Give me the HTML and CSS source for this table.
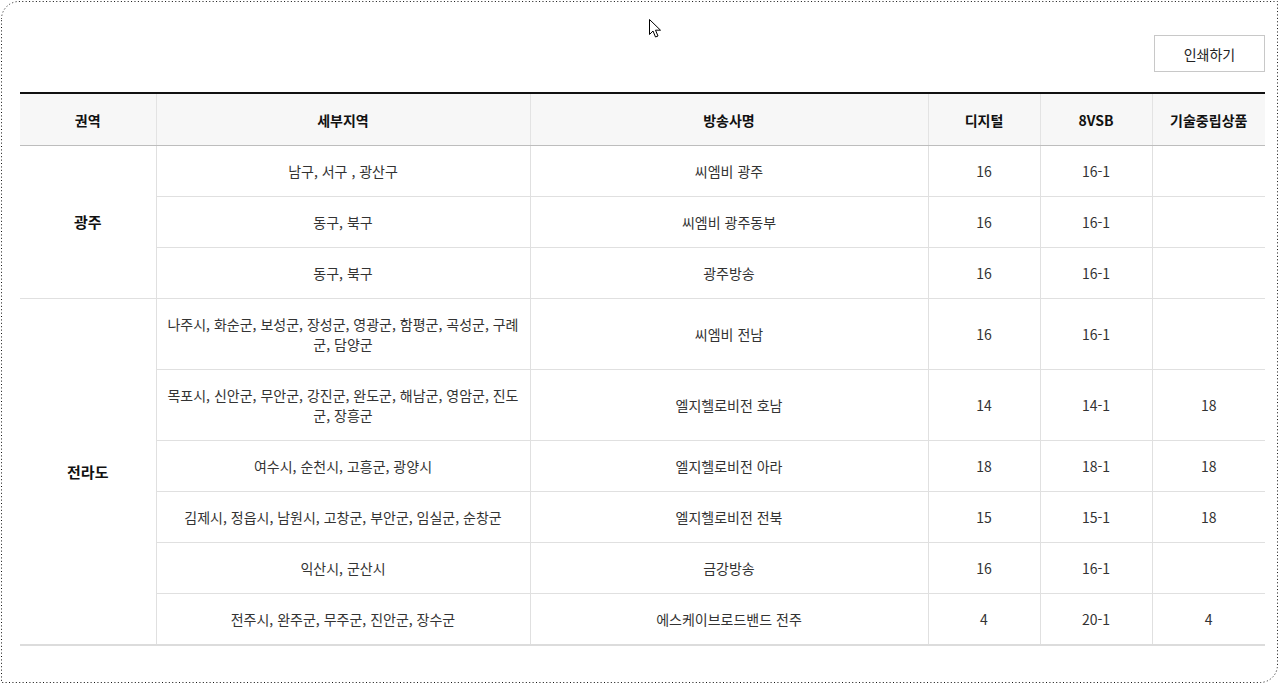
FILE: index.html
```html
<!DOCTYPE html>
<html lang="ko">
<head>
<meta charset="utf-8">
<title>채널 안내</title>
<link rel="stylesheet" href="styles.css">
</head>
<body>
<div class="page">
  <div class="toolbar">
    <button class="print-btn" type="button">인쇄하기</button>
  </div>
  <table class="channel-table">
    <colgroup>
      <col class="c-region">
      <col class="c-detail">
      <col class="c-station">
      <col class="c-num">
      <col class="c-num">
      <col class="c-num-last">
    </colgroup>
    <thead>
      <tr>
        <th>권역</th>
        <th>세부지역</th>
        <th>방송사명</th>
        <th>디지털</th>
        <th>8VSB</th>
        <th>기술중립상품</th>
      </tr>
    </thead>
    <tbody>
      <tr>
        <td class="region" rowspan="3">광주</td>
        <td>남구, 서구 , 광산구</td>
        <td>씨엠비 광주</td>
        <td>16</td>
        <td>16-1</td>
        <td></td>
      </tr>
      <tr>
        <td>동구, 북구</td>
        <td>씨엠비 광주동부</td>
        <td>16</td>
        <td>16-1</td>
        <td></td>
      </tr>
      <tr>
        <td>동구, 북구</td>
        <td>광주방송</td>
        <td>16</td>
        <td>16-1</td>
        <td></td>
      </tr>
      <tr>
        <td class="region" rowspan="6">전라도</td>
        <td>나주시, 화순군, 보성군, 장성군, 영광군, 함평군, 곡성군, 구례군, 담양군</td>
        <td>씨엠비 전남</td>
        <td>16</td>
        <td>16-1</td>
        <td></td>
      </tr>
      <tr>
        <td>목포시, 신안군, 무안군, 강진군, 완도군, 해남군, 영암군, 진도군, 장흥군</td>
        <td>엘지헬로비전 호남</td>
        <td>14</td>
        <td>14-1</td>
        <td>18</td>
      </tr>
      <tr>
        <td>여수시, 순천시, 고흥군, 광양시</td>
        <td>엘지헬로비전 아라</td>
        <td>18</td>
        <td>18-1</td>
        <td>18</td>
      </tr>
      <tr>
        <td>김제시, 정읍시, 남원시, 고창군, 부안군, 임실군, 순창군</td>
        <td>엘지헬로비전 전북</td>
        <td>15</td>
        <td>15-1</td>
        <td>18</td>
      </tr>
      <tr>
        <td>익산시, 군산시</td>
        <td>금강방송</td>
        <td>16</td>
        <td>16-1</td>
        <td></td>
      </tr>
      <tr>
        <td>전주시, 완주군, 무주군, 진안군, 장수군</td>
        <td>에스케이브로드밴드 전주</td>
        <td>4</td>
        <td>20-1</td>
        <td>4</td>
      </tr>
    </tbody>
  </table>
</div>

<svg class="frame" width="1280" height="684" viewBox="0 0 1280 684" aria-hidden="true">
  <path d="M1.5 19 A17.5 17.5 0 0 1 19 1.5 H1277.5 V665 A17.5 17.5 0 0 1 1260 682.5 H1.5 Z"
        fill="none" stroke="#111" stroke-width="1" stroke-dasharray="1 2.4"/>
</svg>

<svg class="cursor" width="14" height="20" viewBox="0 0 14 20" aria-hidden="true">
  <path d="M0.5 0.5 V15.5 L4 12 L6.5 18 L9 17 L6.5 11.2 H11.5 Z" fill="#fff" stroke="#000" stroke-width="1" stroke-linejoin="miter"/>
</svg>
</body>
</html>
```

FILE: styles.css
```css
html, body {
  margin: 0;
  padding: 0;
  background: #fff;
}

body {
  width: 1280px;
  height: 684px;
  overflow: hidden;
  position: relative;
  font-family: "Noto Sans CJK KR", "Noto Sans", sans-serif;
  font-size: 14px;
  color: #333;
}

.page {
  padding: 35px 15px 0 20px;
}

.toolbar {
  display: flex;
  justify-content: flex-end;
  margin-bottom: 20px;
}

.print-btn {
  width: 111px;
  height: 37px;
  border: 1px solid #c8c8c8;
  background: #fff;
  font-family: inherit;
  font-size: 14px;
  color: #222;
  padding: 0;
  line-height: 1;
}

.channel-table {
  width: 1245px;
  border-collapse: collapse;
  table-layout: fixed;
  border-top: 2px solid #111;
  border-bottom: 2px solid #dcdcdc;
}

.c-region { width: 136px; }
.c-detail { width: 374px; }
.c-station { width: 398px; }
.c-num { width: 112px; }
.c-num-last { width: 113px; }

.channel-table th {
  height: 51px;
  padding: 0;
  background: #f7f7f7;
  font-weight: 700;
  font-size: 14px;
  color: #111;
  text-align: center;
  vertical-align: middle;
  border-left: 1px solid #e3e3e3;
  border-bottom: 1px solid #bdbdbd;
  line-height: 20px;
}

.channel-table td {
  padding: 15px 7px;
  line-height: 20px;
  text-align: center;
  vertical-align: middle;
  border-left: 1px solid #e0e0e0;
  border-top: 1px solid #e0e0e0;
  color: #333;
}

.channel-table th:first-child,
.channel-table td.region {
  border-left: none;
}

.channel-table td.region {
  font-weight: 700;
  font-size: 15px;
  color: #111;
}

.channel-table tbody tr:first-child td {
  border-top: none;
}

.frame {
  position: absolute;
  left: 0;
  top: 0;
  pointer-events: none;
}

.cursor {
  position: absolute;
  left: 649px;
  top: 19px;
  pointer-events: none;
}
```
